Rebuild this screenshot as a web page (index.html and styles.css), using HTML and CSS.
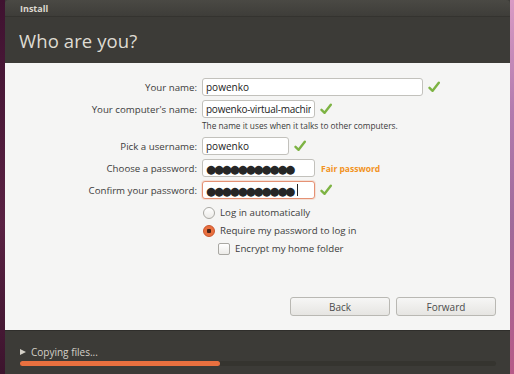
FILE: index.html
```html
<!DOCTYPE html>
<html lang="en">
<head>
  <meta charset="UTF-8">
  <title>Install</title>
  <link rel="stylesheet" href="styles.css">
</head>
<body>
  <div class="desk">
    <div class="edge-left"></div>
    <div class="window">
      <div class="titlebar">Install</div>
      <div class="header"><h1>Who are you?</h1></div>
      <div class="content">
        <div class="form">
          <label>Your name:</label>
          <div class="field"><input class="in-wide" type="text" value="powenko"><svg class="ok" viewBox="0 0 12 12"><path d="M1.5 6.8 L4.6 9.8 L10.8 1.8" /></svg></div>

          <label>Your computer's name:</label>
          <div class="field"><input class="in-mid tight" type="text" value="powenko-virtual-machine"><svg class="ok" viewBox="0 0 12 12"><path d="M1.5 6.8 L4.6 9.8 L10.8 1.8" /></svg></div>
          <span></span>
          <div class="hint">The name it uses when it talks to other computers.</div>

          <label>Pick a username:</label>
          <div class="field"><input class="in-short" type="text" value="powenko"><svg class="ok" viewBox="0 0 12 12"><path d="M1.5 6.8 L4.6 9.8 L10.8 1.8" /></svg></div>

          <label>Choose a password:</label>
          <div class="field"><input class="in-mid dots" type="text" value="●●●●●●●●●●●"><span class="strength">Fair password</span></div>

          <label>Confirm your password:</label>
          <div class="field"><div class="in-mid dots focus">●●●●●●●●●●●<i class="caret"></i></div><svg class="ok" viewBox="0 0 12 12"><path d="M1.5 6.8 L4.6 9.8 L10.8 1.8" /></svg></div>
        </div>

        <div class="options">
          <div class="opt"><span class="radio"></span>Log in automatically</div>
          <div class="opt"><span class="radio on"></span>Require my password to log in</div>
          <div class="opt sub"><span class="check"></span>Encrypt my home folder</div>
        </div>

        <div class="buttons">
          <button>Back</button>
          <button>Forward</button>
        </div>
      </div>
      <div class="footer">
        <div class="status"><span class="tri"></span>Copying files...</div>
        <div class="progress"><div class="bar" style="width:42%"></div></div>
      </div>
    </div>
    <div class="edge-right"></div>
  </div>
</body>
</html>
```

FILE: styles.css
```css
:root{--dark:#3c3b37;--orange:#e9703f;--text:#3c3c3c;--light:#f5f5f4}
body{margin:0;font-family:'Open Sans','DejaVu Sans',sans-serif;background:#4b1b36}
.desk{display:flex;height:374px;width:514px;overflow:hidden}
.edge-left{width:5px;background:linear-gradient(#3f1230,#5a2243 60%,#3c142d)}
.edge-right{width:4px;background:linear-gradient(#d99ac4,#b27aae 30%,#a06a9a 60%,#b75a88)}
.window{width:505px;display:flex;flex-direction:column;background:var(--dark)}
.titlebar{height:17px;box-sizing:border-box;padding:2px 0 0 15px;font-size:9px;font-weight:bold;color:#dcd8cf;background:linear-gradient(#4a4944,#3e3d39);border-bottom:1px solid #34332f;border-radius:4px 4px 0 0}
.header{height:46px;box-sizing:border-box;padding:11px 0 0 14px}
.header h1{margin:0;font-size:18.5px;font-weight:normal;color:#dfdbd2;letter-spacing:.1px}
.content{flex:1;background:var(--light);display:flex;flex-direction:column;padding:15px 0 0;border-bottom:1px solid #2f2e2b}
.form{display:grid;grid-template-columns:192px 1fr;column-gap:5px;row-gap:4px;align-items:center;font-size:9.7px;color:var(--text)}
.form label{text-align:right}
.field{display:flex;align-items:center;gap:5px;height:18px}
.field input,.field .in-mid.focus{box-sizing:border-box;height:18px;border:1px solid #c2c1bc;border-radius:3px;background:#fff;font-family:inherit;font-size:10px;color:#222;padding:0 3px;margin:0;outline:none}
.in-wide{width:221px}
.in-mid{width:113px}
.in-short{width:87px}
.tight{letter-spacing:-.25px}
.dots{font-size:11.5px !important;letter-spacing:-2.1px;color:#262626 !important;padding:0 3px !important}
.field .in-mid.focus{border-color:#e59174;display:flex;align-items:center;box-shadow:0 0 0 1px rgba(233,112,63,.15)}
.caret{display:inline-block;width:1px;height:12px;background:#222;margin-left:4px}
.ok{width:12px;height:12px;fill:none;stroke:#7db343;stroke-width:2.4;stroke-linecap:round;stroke-linejoin:round}
.strength{font-size:8.5px;font-weight:bold;color:#f29322;margin-left:1px}
.hint{font-size:8.3px;color:#3a3a3a;margin:-2px 0 2px 0}
.options{margin:7px 0 0 198px;display:flex;flex-direction:column;gap:5px;font-size:9.7px;color:var(--text)}
.opt{display:flex;align-items:center;gap:5px;height:13px}
.opt.sub{margin-left:15px}
.radio{width:10px;height:10px;border-radius:50%;border:1px solid #a9a8a3;background:linear-gradient(#fff,#ecebe8)}
.radio.on{border-color:#c9522a;background:radial-gradient(circle,#4a2418 0 2px,#e9703f 2.5px)}
.check{width:10px;height:10px;border-radius:2px;border:1px solid #a9a8a3;background:linear-gradient(#fff,#ecebe8)}
.buttons{margin-top:auto;margin-bottom:14px;display:flex;justify-content:flex-end;gap:6px;padding-right:14px}
.buttons button{width:100px;height:19px;border:1px solid #b9b8b3;border-radius:3px;background:linear-gradient(#f6f6f5,#e6e5e2);font-family:inherit;font-size:10px;color:#4c4c4c;padding:0}
.footer{height:43px;box-sizing:border-box;padding:14px 0 0 15px}
.status{display:flex;align-items:center;gap:5px;font-size:10px;color:#d4d0c7}
.tri{width:0;height:0;border-left:6px solid #d4d0c7;border-top:3.5px solid transparent;border-bottom:3.5px solid transparent}
.progress{margin-top:2px;width:476px;height:5px;border-radius:3px;background:#35342f}
.bar{height:100%;border-radius:3px;background:var(--orange)}
```
